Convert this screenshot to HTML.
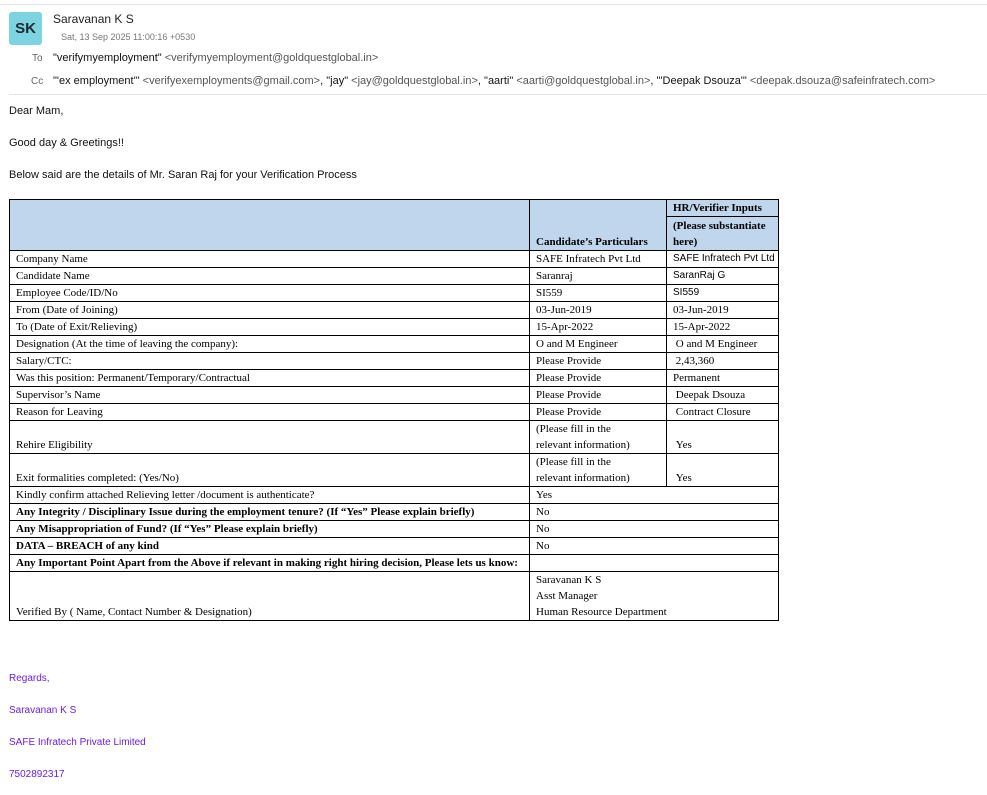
<!DOCTYPE html>
<html><head><meta charset="utf-8"><style>
body{margin:0;background:#fff;width:987px;height:795px;position:relative;overflow:hidden;font-family:"Liberation Sans",sans-serif;}
.a{position:absolute;white-space:nowrap;}
.g{color:#555}
table{position:absolute;left:9px;top:199px;border-collapse:collapse;font-family:"Liberation Serif",serif;font-size:11px;color:#000;table-layout:fixed;width:769px}
td{border:1px solid #000;padding:0 0 0 6px;vertical-align:bottom;line-height:16px;height:16px;overflow:hidden;white-space:nowrap}
.h{background:#c0d6ec;font-weight:bold}
b{font-weight:bold}
.sig{color:#6a1de0;font-size:10px;left:9px}
</style></head><body>
<div class="a" style="left:0;top:4px;width:987px;border-top:1px solid #e4e4e4"></div>
<div class="a" style="left:9px;top:12px;width:33px;height:33px;background:#7dd3e0;border-radius:3px;font-size:15px;font-weight:bold;color:#1a2a30;text-align:center;line-height:33px">SK</div>
<div class="a" style="left:53px;top:12px;font-size:12px;color:#222">Saravanan K S</div>
<div class="a g" style="left:61px;top:32px;font-size:9px;color:#777">Sat, 13 Sep 2025 11:00:16 +0530</div>
<div class="a g" style="left:32px;top:53px;font-size:10px;color:#666">To</div>
<div class="a" style="left:53px;top:52px;font-size:11px;color:#111">"verifymyemployment" <span class="g">&lt;verifymyemployment@goldquestglobal.in&gt;</span></div>
<div class="a g" style="left:31px;top:76px;font-size:10px;color:#666">Cc</div>
<div class="a" style="left:53px;top:75px;font-size:11px;color:#111">"'ex employment'" <span class="g">&lt;verifyexemployments@gmail.com&gt;</span>, "jay" <span class="g">&lt;jay@goldquestglobal.in&gt;</span>, "aarti" <span class="g">&lt;aarti@goldquestglobal.in&gt;</span>, "'Deepak Dsouza'" <span class="g">&lt;deepak.dsouza@safeinfratech.com&gt;</span></div>
<div class="a" style="left:9px;top:94px;width:978px;border-top:1px solid #e4e4e4"></div>
<div class="a" style="left:9px;top:105px;font-size:11px;color:#111">Dear Mam,</div>
<div class="a" style="left:9px;top:137px;font-size:11px;color:#111">Good day &amp; Greetings!!</div>
<div class="a" style="left:9px;top:169px;font-size:11px;color:#111">Below said are the details of Mr. Saran Raj for your Verification Process</div>
<table>
<colgroup><col style="width:520px"><col style="width:137px"><col style="width:112px"></colgroup>
<tr><td class="h" rowspan="2" style="height:50px"></td><td class="h" rowspan="2">Candidate’s Particulars</td><td class="h">HR/Verifier Inputs</td></tr>
<tr><td class="h" style="height:33px">(Please substantiate<br>here)</td></tr>
<tr><td>Company Name</td><td>SAFE Infratech Pvt Ltd</td><td style="font-family:'Liberation Sans';font-size:10px">SAFE Infratech Pvt Ltd</td></tr>
<tr><td>Candidate Name</td><td>Saranraj</td><td style="font-family:'Liberation Sans';font-size:10px">SaranRaj G</td></tr>
<tr><td>Employee Code/ID/No</td><td>SI559</td><td style="font-family:'Liberation Sans';font-size:10px">SI559</td></tr>
<tr><td>From (Date of Joining)</td><td>03-Jun-2019</td><td>03-Jun-2019</td></tr>
<tr><td>To (Date of Exit/Relieving)</td><td>15-Apr-2022</td><td>15-Apr-2022</td></tr>
<tr><td>Designation (At the time of leaving the company):</td><td>O and M Engineer</td><td>&nbsp;O and M Engineer</td></tr>
<tr><td>Salary/CTC:</td><td>Please Provide</td><td>&nbsp;2,43,360</td></tr>
<tr><td>Was this position: Permanent/Temporary/Contractual</td><td>Please Provide</td><td>Permanent</td></tr>
<tr><td>Supervisor’s Name</td><td>Please Provide</td><td>&nbsp;Deepak Dsouza</td></tr>
<tr><td>Reason for Leaving</td><td>Please Provide</td><td>&nbsp;Contract Closure</td></tr>
<tr><td style="height:32px">Rehire Eligibility</td><td>(Please fill in the<br>relevant information)</td><td>&nbsp;Yes</td></tr>
<tr><td style="height:32px">Exit formalities completed: (Yes/No)</td><td>(Please fill in the<br>relevant information)</td><td>&nbsp;Yes</td></tr>
<tr><td>Kindly confirm attached Relieving letter /document is authenticate?</td><td colspan="2">Yes</td></tr>
<tr><td><b>Any Integrity / Disciplinary Issue during the employment tenure? (If “Yes” Please explain briefly)</b></td><td colspan="2">No</td></tr>
<tr><td><b>Any Misappropriation of Fund? (If “Yes” Please explain briefly)</b></td><td colspan="2">No</td></tr>
<tr><td><b>DATA – BREACH of any kind</b></td><td colspan="2">No</td></tr>
<tr><td><b>Any Important Point Apart from the Above if relevant in making right hiring decision, Please lets us know:</b></td><td colspan="2"></td></tr>
<tr><td style="height:47px">Verified By ( Name, Contact Number &amp; Designation)</td><td colspan="2">Saravanan K S<br>Asst Manager<br>Human Resource Department</td></tr>
</table>
<div class="a sig" style="top:673px">Regards,</div>
<div class="a sig" style="top:705px">Saravanan K S</div>
<div class="a sig" style="top:737px">SAFE Infratech Private Limited</div>
<div class="a sig" style="top:769px">7502892317</div>
</body></html>
